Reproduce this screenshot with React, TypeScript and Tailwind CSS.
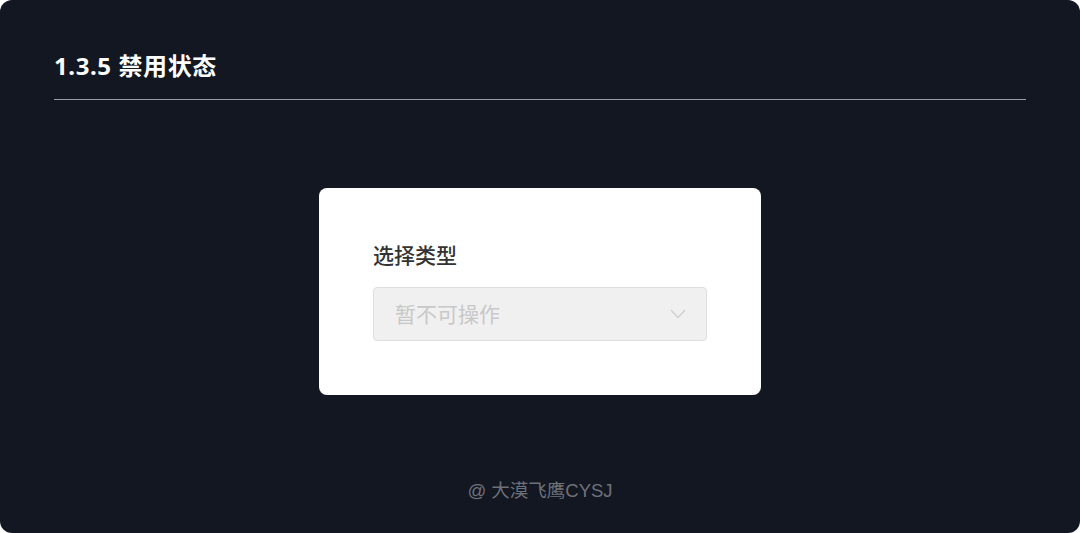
import React from "react";

export default function App() {
  return (
    <div className="w-[1080px] h-[533px] bg-white">
      <div
        className="w-[1080px] h-[533px] bg-[#121722] rounded-[12px] flex flex-col px-[54px]"
        style={{ fontFamily: '"Noto Sans", "Noto Sans CJK SC", sans-serif' }}
      >
        <div className="pt-[48px] h-[100px] border-b border-[#9a9ca3]">
          <h1 className="text-white text-[24px] font-bold leading-[36px] tracking-[0.6px]">1.3.5 禁用状态</h1>
        </div>
        <div className="flex justify-center pt-[88px]">
          <div className="w-[442px] h-[207px] bg-white rounded-[8px] px-[54px] pt-[51px]">
            <div className="text-[#333333] text-[21px] font-medium leading-[32px]">选择类型</div>
            <div className="mt-[16px] h-[54px] bg-[#f0f0f0] border border-[#dedede] rounded-[4px] flex items-center justify-between pl-[21px] pr-[20px]">
              <span className="text-[#c8c8c8] text-[21px] leading-none">暂不可操作</span>
              <svg width="16" height="10" viewBox="0 0 16 10" fill="none">
                <path d="M1 1 L8 8.5 L15 1" stroke="#cfcfcf" strokeWidth="1.3" />
              </svg>
            </div>
          </div>
        </div>
        <div className="flex justify-center mt-[84px]">
          <span className="text-[#6f7179] text-[18.5px] leading-[24px]" style={{ fontFamily: '"Liberation Sans", "Noto Sans CJK SC", sans-serif' }}>@ 大漠飞鹰CYSJ</span>
        </div>
      </div>
    </div>
  );
}
